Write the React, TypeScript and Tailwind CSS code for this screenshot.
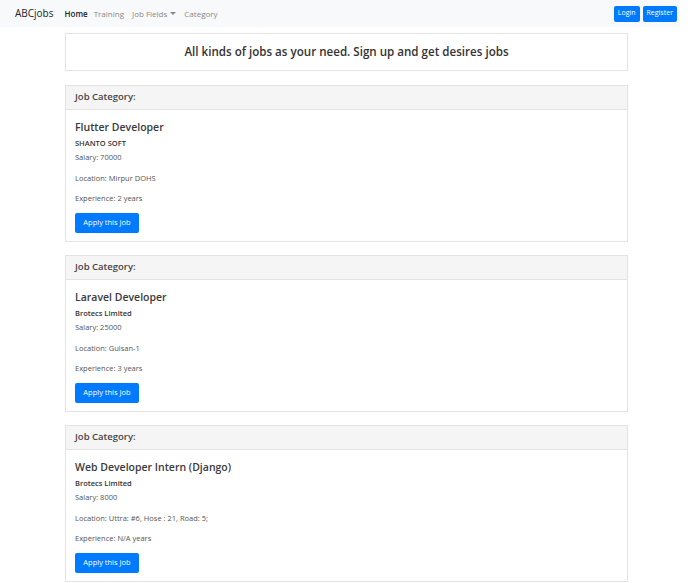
const jobs = [
  {
    title: "Flutter Developer",
    company: "SHANTO SOFT",
    salary: "70000",
    location: "Mirpur DOHS",
    experience: "2",
  },
  {
    title: "Laravel Developer",
    company: "Brotecs Limited",
    salary: "25000",
    location: "Gulsan-1",
    experience: "3",
  },
  {
    title: "Web Developer Intern (Django)",
    company: "Brotecs Limited",
    salary: "8000",
    location: "Uttra: #6, Hose : 21, Road: 5;",
    experience: "N/A",
  },
];

function Navbar() {
  return (
    <nav className="w-[680px] h-[27px] bg-[#f8f9fa] flex items-center pl-[15px] pr-[3px]">
      <span className="text-[10px] text-[#212529] mr-[11px]">ABCjobs</span>
      <div className="flex items-center gap-[6px] text-[8px]">
        <span className="text-[#212529] font-semibold">Home</span>
        <span className="text-[#888]">Training</span>
        <span className="text-[#888] flex items-center gap-[3px] ml-[2px]">
          Job Fields
          <span className="w-0 h-0 border-l-[3px] border-r-[3px] border-t-[3px] border-l-transparent border-r-transparent border-t-[#888]" />
        </span>
        <span className="text-[#888] ml-[2px]">Category</span>
      </div>
      <div className="ml-auto flex gap-[3px]">
        <button className="bg-[#007bff] text-white text-[7px] rounded-[2px] px-[4px] h-[16px]">
          Login
        </button>
        <button className="bg-[#007bff] text-white text-[7px] rounded-[2px] px-[4px] h-[16px]">
          Register
        </button>
      </div>
    </nav>
  );
}

export default function App() {
  return (
    <div className="w-[691px] min-h-[583px] bg-white font-['Open_Sans',sans-serif] text-[#212529]">
      <Navbar />
      <div className="ml-[65px] w-[563px] pt-[6px]">
        <div className="h-[38px] border border-[#e3e3e3] flex items-center justify-center text-[11.6px] font-semibold text-[#333]">
          All kinds of jobs as your need. Sign up and get desires jobs
        </div>
        <div className="flex flex-col gap-[13px] mt-[14px]">
          {jobs.map((job) => (
            <div key={job.title} className="border border-[#e3e3e3]">
              <div className="h-[24px] bg-[#f5f5f5] border-b border-[#e3e3e3] flex items-center px-[9px] text-[9.5px] font-semibold text-[#444]">
                Job Category:
              </div>
              <div className="px-[9px] pt-[10px] pb-[8px]">
                <div className="text-[10.5px] font-semibold text-[#3a3a3a] leading-[14px]">{job.title}</div>
                <div className="text-[7.5px] font-semibold text-[#333] leading-[11px] mt-[4px]">{job.company}</div>
                <div className="text-[7.5px] text-[#555] leading-[11px] mt-[3px]">Salary: {job.salary}</div>
                <div className="text-[7.5px] text-[#555] leading-[11px] mt-[10px]">Location: {job.location}</div>
                <div className="text-[7.5px] text-[#555] leading-[11px] mt-[9px]">Experience: {job.experience} years</div>
                <button className="mt-[9px] bg-[#007bff] text-white text-[7.5px] rounded-[2px] w-[64px] h-[20px]">
                  Apply this Job
                </button>
              </div>
            </div>
          ))}
        </div>
      </div>
    </div>
  );
}
